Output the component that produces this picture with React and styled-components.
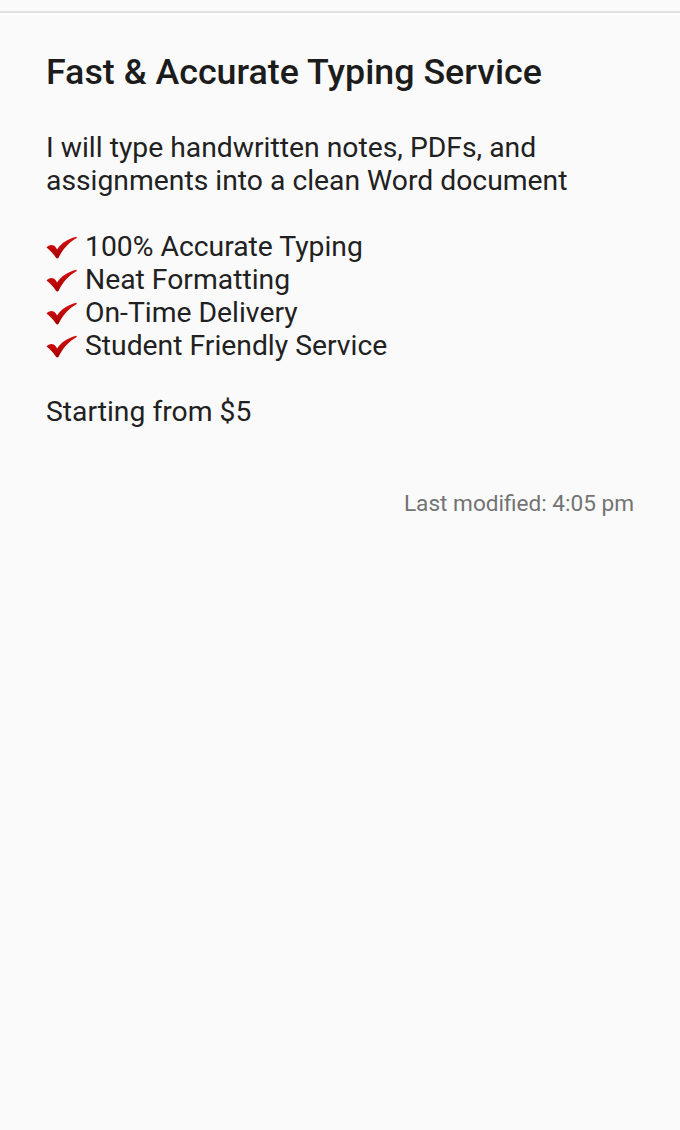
import React from "react";
import styled, { createGlobalStyle } from "styled-components";

const Global = createGlobalStyle`
  html, body { margin: 0; padding: 0; background: #fafafa; }
  body { font-family: Roboto, "Noto Sans", sans-serif; -webkit-font-smoothing: antialiased; }
`;

const Page = styled.div`
  min-height: 1130px;
  background: #fafafa;
  padding-top: 11px;
  box-sizing: border-box;
`;

const TopRule = styled.div`
  height: 2px;
  background: #e0e0e0;
  border-bottom: 2px solid #ffffff;
`;

const Content = styled.main`
  padding: 36px 46px 0 46px;
  display: flex;
  flex-direction: column;
`;

const Title = styled.h1`
  margin: 0;
  font-size: 35.8px;
  font-weight: 500;
  line-height: 42px;
  color: #1c1c1c;
  white-space: nowrap;
`;

const Paragraph = styled.p`
  margin: ${(p) => p.$top || 0}px 0 0 0;
  font-size: 28.3px;
  line-height: 33px;
  color: #212121;
  white-space: nowrap;
`;

const List = styled.ul`
  list-style: none;
  margin: 32.5px 0 0 0;
  padding: 0;
  display: flex;
  flex-direction: column;
`;

const Item = styled.li`
  display: flex;
  align-items: center;
  gap: 8px;
  font-size: 28.3px;
  line-height: 33px;
  color: #212121;
  white-space: nowrap;
`;

const Check = styled.svg`
  width: 31px;
  height: 23px;
  flex: none;
  margin-top: 2px;
`;

const Meta = styled.div`
  margin-top: 61px;
  align-self: flex-end;
  font-size: 22.6px;
  line-height: 30px;
  color: #737373;
`;

const CheckIcon = () => (
  <Check viewBox="0 0 32 23">
    <defs>
      <linearGradient id="cg" x1="0" y1="0" x2="0.3" y2="1">
        <stop offset="0" stopColor="#e31414" />
        <stop offset="1" stopColor="#a50000" />
      </linearGradient>
    </defs>
    <path
      d="M0.5 11.5 C2.5 9 5.5 8 8 9.5 C9.5 10.5 10.5 12 11.5 13.5 C16 7 22.5 2.5 31.5 0.5 L31.8 1.8 C24 6 17.5 13 13 22 C12.3 23 11 23 10.3 22 C7.5 18 4.5 14.5 0.5 11.5 Z"
      fill="url(#cg)"
    />
  </Check>
);

const features = [
  "100% Accurate Typing",
  "Neat Formatting",
  "On-Time Delivery",
  "Student Friendly Service",
];

export default function App() {
  return (
    <Page>
      <Global />
      <TopRule />
      <Content>
        <Title>Fast &amp; Accurate Typing Service</Title>
        <Paragraph $top={38}>
          I will type handwritten notes, PDFs, and
          <br />
          assignments into a clean Word document
        </Paragraph>
        <List>
          {features.map((f) => (
            <Item key={f}>
              <CheckIcon />
              <span>{f}</span>
            </Item>
          ))}
        </List>
        <Paragraph $top={33}>Starting from $5</Paragraph>
        <Meta>Last modified: 4:05 pm</Meta>
      </Content>
    </Page>
  );
}
